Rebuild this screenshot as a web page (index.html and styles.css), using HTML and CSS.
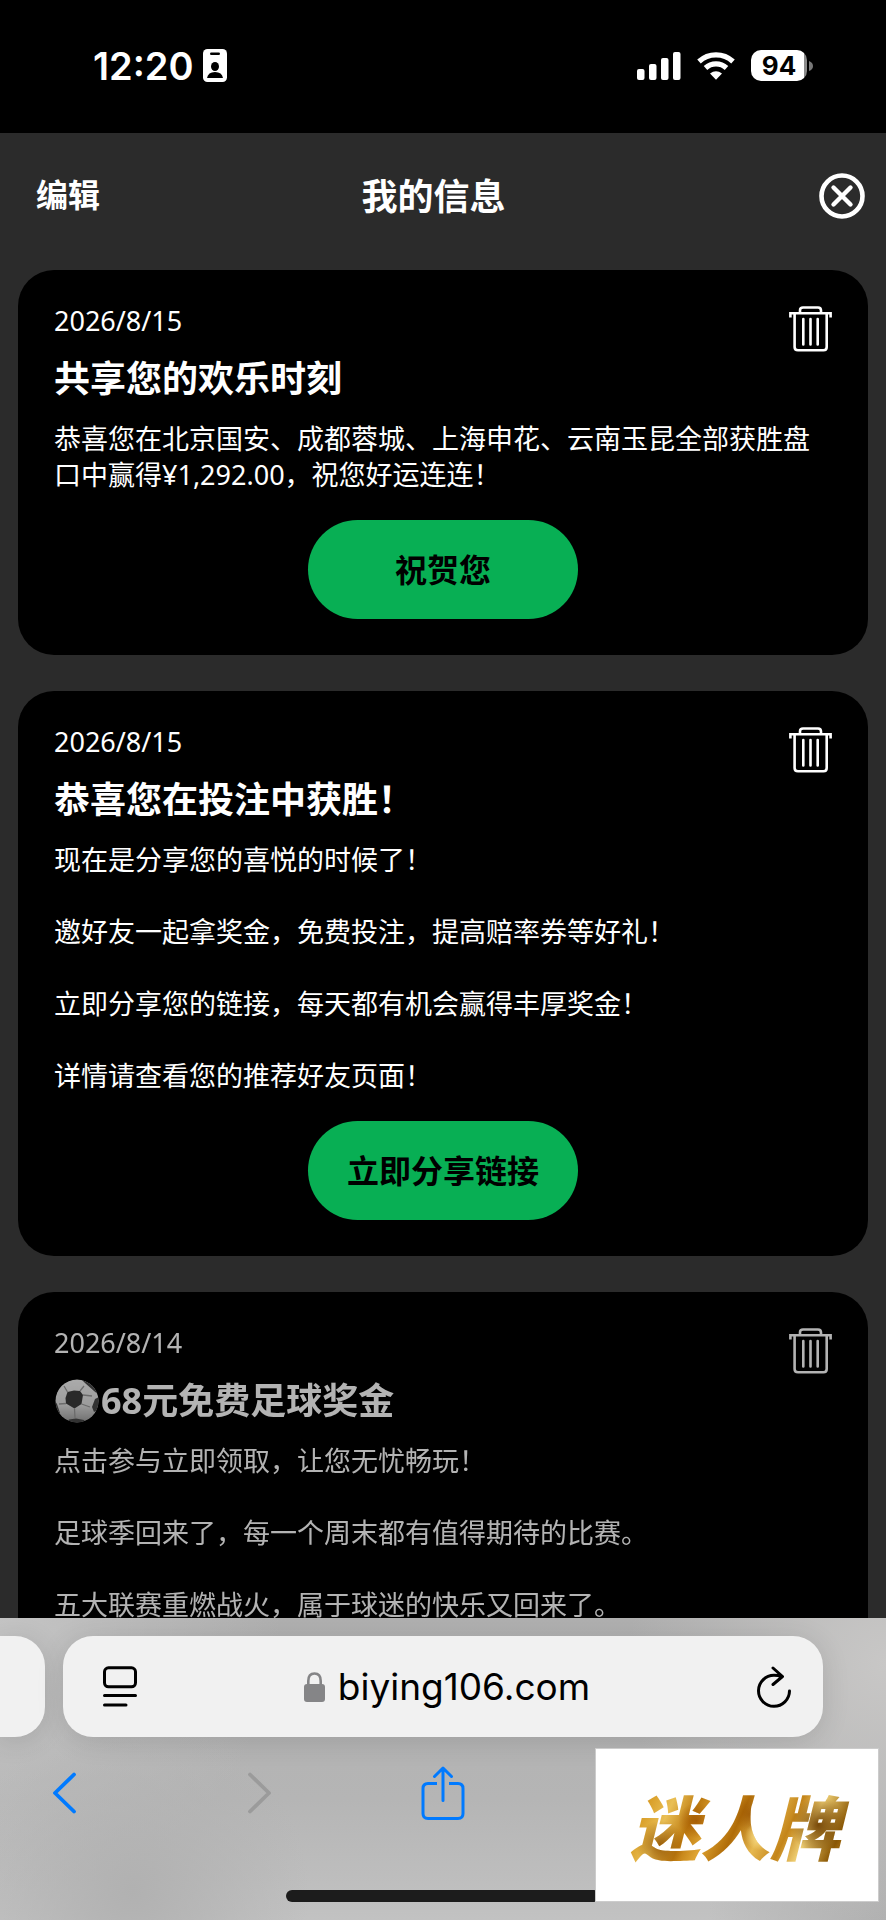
FILE: index.html
```html
<!DOCTYPE html>
<html lang="zh-CN">
<head>
<meta charset="utf-8">
<meta name="viewport" content="width=device-width, initial-scale=1">
<title>我的信息</title>
<link rel="stylesheet" href="styles.css">
</head>
<body>
<svg class="defs" aria-hidden="true">
  <symbol id="trash" viewBox="0 0 43 46">
    <g fill="none" stroke="currentColor" stroke-width="2.6">
      <path d="M1.400 11.500V7.200H41.600V11.500M11 7V4.500Q11 1.500 14 1.500H29Q32 1.500 32 4.500V7"/>
      <path d="M5.600 7.500V41Q5.600 44.300 9 44.300H34.500Q37.700 44.300 37.700 41V7.500"/>
      <path stroke-linecap="round" d="M14.300 13V38.500M21.500 13V38.500M28.700 13V38.500"/>
    </g>
  </symbol>
</svg>

<div class="status">
  <div class="status-left">
    <span class="time">12:20</span>
    <svg width="24" height="33" viewBox="0 0 24 33"><rect width="24" height="33" rx="4.500" fill="#fff"/><rect x="7" y="3.500" width="10" height="2.600" rx="1.300"/><ellipse cx="12" cy="17.500" rx="4" ry="4.500"/><path d="M4 29Q5 23 12 23T20 29Z"/></svg>
  </div>
  <div class="status-right">
    <svg width="44" height="28" viewBox="0 0 44 28" fill="#fff"><rect y="17" width="7.500" height="11" rx="2"/><rect x="12" y="12" width="7.500" height="16" rx="2"/><rect x="24" y="6" width="7.500" height="22" rx="2"/><rect x="36" width="7.500" height="28" rx="2"/></svg>
    <svg width="38" height="28" viewBox="0 0 38 28"><path d="M2 9.500A25 25 0 0 1 36 9.500M8.500 16A15.500 15.500 0 0 1 29.500 16" fill="none" stroke="#fff" stroke-width="5.200"/><path d="M13 21.500Q19 17 25 21.500L19 27.800Z" fill="#fff"/></svg>
    <span class="battery"><span class="level">94</span><svg width="4" height="10" viewBox="0 0 4 10"><path d="M0 0Q4 1.500 4 5T0 10Z" fill="#777"/></svg></span>
  </div>
</div>

<header class="header">
  <button class="edit">编辑</button>
  <h1 class="title">我的信息</h1>
  <button class="close" aria-label="关闭"><svg width="46" height="46" viewBox="0 0 46 46" fill="none" stroke="#fff"><circle cx="23" cy="23" r="20.500" stroke-width="4.600"/><path d="M14.500 14.500L31.500 31.500M31.500 14.500L14.500 31.500" stroke-width="4.400" stroke-linecap="round"/></svg></button>
</header>

<main class="list">
  <article class="card">
    <div class="card-top"><time datetime="2026-08-15">2026/8/15</time><button class="delete" aria-label="删除"><svg><use href="#trash"/></svg></button></div>
    <h2>共享您的欢乐时刻</h2>
    <div class="text"><p>恭喜您在北京国安、成都蓉城、上海申花、云南玉昆全部获胜盘口中赢得¥1,292.00，祝您好运连连！</p></div>
    <button class="action">祝贺您</button>
  </article>
  <article class="card">
    <div class="card-top"><time datetime="2026-08-15">2026/8/15</time><button class="delete" aria-label="删除"><svg><use href="#trash"/></svg></button></div>
    <h2>恭喜您在投注中获胜！</h2>
    <div class="text">
      <p>现在是分享您的喜悦的时候了！</p>
      <p>邀好友一起拿奖金，免费投注，提高赔率券等好礼！</p>
      <p>立即分享您的链接，每天都有机会赢得丰厚奖金！</p>
      <p>详情请查看您的推荐好友页面！</p>
    </div>
    <button class="action">立即分享链接</button>
  </article>
  <article class="card read">
    <div class="card-top"><time datetime="2026-08-14">2026/8/14</time><button class="delete" aria-label="删除"><svg><use href="#trash"/></svg></button></div>
    <h2><svg class="ball" viewBox="0 0 44 44" aria-hidden="true">
      <defs><clipPath id="round"><circle cx="22" cy="22" r="21.500"/></clipPath><linearGradient id="shade" x1="0" y1="0" x2="0" y2="1"><stop offset="0" stop-color="#f4f4f4"/><stop offset=".6" stop-color="#dedede"/><stop offset="1" stop-color="#9c9c9c"/></linearGradient></defs>
      <g clip-path="url(#round)"><circle cx="22" cy="22" r="22" fill="url(#shade)"/>
      <path d="M12.500 13L19 11.500L25 12L28 16L26.500 25L19.500 29.500L11 24.500L10.500 19Z" fill="#3b3b3b"/>
      <path d="M12.500 13L9 7M25 12L29 7M28 16L37 17M26.500 25L35 28M19.500 29.500L20 39M11 24.500L4 25" stroke="#999" stroke-width="1.300"/>
      <path d="M26 0L30 4L39 12L44 16V0ZM44 18L40 20L37 28L39 33L44 30ZM11 44L14 40.500L21 39.500L29 41L31 44ZM0 22L2 25L5 34L0 34Z" fill="#484848"/></g>
    </svg>68元免费足球奖金</h2>
    <div class="text">
      <p>点击参与立即领取，让您无忧畅玩！</p>
      <p>足球季回来了，每一个周末都有值得期待的比赛。</p>
      <p>五大联赛重燃战火，属于球迷的快乐又回来了。</p>
    </div>
  </article>
</main>

<footer class="browser">
  <div class="tabs">
    <div class="tab-peek"></div>
    <div class="address">
      <button aria-label="页面菜单"><svg width="34" height="42" viewBox="0 0 34 42" fill="none" stroke="#000" stroke-width="3" stroke-linecap="round"><rect x="1.500" y="1.800" width="31" height="19" rx="4"/><path d="M1.500 29.500H32.500M1.500 39H23"/></svg></button>
      <button class="url"><svg width="21" height="30" viewBox="0 0 21 30"><path d="M4.300 13V9Q4.300 1.500 10.500 1.500T16.700 9V13" fill="none" stroke="#858587" stroke-width="2.600"/><rect y="12" width="21" height="18" rx="3" fill="#858587"/></svg><span>biying106.com</span></button>
      <button aria-label="重新加载"><svg width="34" height="42" viewBox="0 0 34 42" fill="none" stroke="#000" stroke-width="3" stroke-linecap="round" stroke-linejoin="round"><path d="M32.500 25A15.500 15.500 0 1 1 17 9.300Q21 9.300 24.500 10.500M16 2L25.500 10.500L16 18.500"/></svg></button>
    </div>
  </div>
  <nav class="nav">
    <button aria-label="后退"><svg width="30" height="42" viewBox="0 0 30 42" fill="none" stroke="#007aff" stroke-width="3.800" stroke-linecap="round" stroke-linejoin="round"><path d="M21 2.500L2 21L21 39.500"/></svg></button>
    <button aria-label="前进" disabled><svg width="30" height="42" viewBox="0 0 30 42" fill="none" stroke="#9b9b9b" stroke-width="3.800" stroke-linecap="round" stroke-linejoin="round"><path d="M9 2.500L28 21L9 39.500"/></svg></button>
    <button aria-label="分享"><svg width="44" height="54" viewBox="0 0 44 54" fill="none" stroke="#007aff" stroke-width="3" stroke-linecap="round" stroke-linejoin="round"><path stroke-linecap="butt" d="M16 17.500H7Q2 17.500 2 22.500V47.500Q2 52.500 7 52.500H37Q42 52.500 42 47.500V22.500Q42 17.500 37 17.500H28"/><path d="M22 34.500V2.500M13.500 10.500L22 2L30.500 10.500"/></svg></button>
  </nav>
  <div class="home"></div>
  <div class="badge"><span>迷人牌</span></div>
</footer>
</body>
</html>
```
FILE: styles.css
```css
* { box-sizing: border-box; }
body {
  margin: 0;
  height: 100vh;
  display: flex;
  flex-direction: column;
  overflow: hidden;
  background: #2b2b2b;
  color: #fff;
  font-family: "Noto Sans", "Noto Sans CJK SC", sans-serif;
  font-size: 27px;
  line-height: 36px;
}
button {
  margin: 0;
  padding: 0;
  border: 0;
  background: none;
  color: inherit;
  font: inherit;
}
svg { display: block; flex: none; }
h1, h2, p { margin: 0; }
.defs { position: absolute; width: 0; height: 0; }

.status {
  flex: none;
  height: 133px;
  padding: 0 73px 2px 93px;
  display: flex;
  justify-content: space-between;
  align-items: center;
  background: #000;
  font-family: Inter, sans-serif;
}
.status-left, .status-right, .battery { display: flex; align-items: center; }
.status-left { gap: 9px; }
.status-right { gap: 16px; }
.time { font-size: 38px; font-weight: 600; }
.battery { gap: 2px; }
.level {
  width: 56px;
  height: 31px;
  border-radius: 10px;
  background: linear-gradient(90deg, #fff 94%, #8a8a8a 94%);
  color: #000;
  font-size: 26px;
  font-weight: 700;
  line-height: 31px;
  text-align: center;
}

.header {
  flex: none;
  height: 126px;
  padding: 0 21px 0 36px;
  display: grid;
  grid-template-columns: 1fr auto 1fr;
  align-items: center;
}
.edit { justify-self: start; padding-bottom: 2px; font-size: 32px; font-weight: 600; }
.title { padding: 2px 34px 0 0; font-size: 36px; font-weight: 600; }
.close { justify-self: end; }

.list {
  flex: 1;
  min-height: 0;
  overflow: hidden;
  padding: 11px 18px 0;
  display: flex;
  flex-direction: column;
  gap: 36px;
}
.card {
  flex: none;
  padding: 36px;
  border-radius: 36px;
  background: #000;
  display: flex;
  flex-direction: column;
}
.card-top {
  height: 31px;
  line-height: 30px;
  display: flex;
  justify-content: space-between;
  align-items: flex-start;
}
.delete svg { width: 43px; height: 46px; }
.card h2 {
  margin: 18px 0;
  font-size: 36px;
  font-weight: 700;
  line-height: 48px;
  display: flex;
  align-items: center;
}
.text { display: flex; flex-direction: column; gap: 36px; }
.action {
  align-self: center;
  width: 270px;
  height: 99px;
  margin-top: 27px;
  border-radius: 50px;
  background: #08af54;
  color: #000;
  font-size: 32px;
  font-weight: 600;
}
.read > * { opacity: .7; }
.ball { width: 44px; height: 44px; margin: 0 2px 0 1px; }

.browser {
  position: relative;
  flex: none;
  height: 302px;
  padding: 18px 0;
  display: flex;
  flex-direction: column;
  overflow: hidden;
  background:
    radial-gradient(circle at 15% 90%, #b1b1b1, transparent 22%),
    radial-gradient(circle at 0% 0%, #c4c4c4, transparent 30%),
    radial-gradient(circle at 100% 15%, #c8c7c6, transparent 28%),
    linear-gradient(90deg, transparent 80%, #b1b1b1),
    linear-gradient(#b0b0b0, #b5b5b5 60%, #c2c2c2);
}
.tabs { display: flex; gap: 18px; padding-right: 63px; }
.tab-peek, .address {
  height: 101px;
  background: #f1f1f1;
  box-shadow: 0 4px 28px rgba(0, 0, 0, .12);
}
.tab-peek { width: 45px; border-radius: 0 30px 30px 0; }
.address {
  flex: 1;
  padding: 0 32px 0 40px;
  border-radius: 30px;
  display: flex;
  align-items: center;
  justify-content: space-between;
  color: #000;
}
.url {
  display: flex;
  align-items: center;
  gap: 13px;
  font-family: Inter, sans-serif;
  font-size: 37px;
}
.nav {
  width: calc(50% + 43px);
  padding: 29px 0 0 25px;
  display: flex;
  justify-content: space-between;
  align-items: center;
}
.nav button { width: 86px; display: flex; justify-content: center; }
.home {
  width: 314px;
  height: 12px;
  margin: auto auto 0;
  border-radius: 6px;
  background: #1c1c1c;
}
.badge {
  position: absolute;
  right: 7px;
  bottom: 18px;
  width: 284px;
  height: 154px;
  border: 1px solid #ccc;
  background: #fff;
  display: flex;
  align-items: center;
  justify-content: center;
}
.badge span {
  padding: 0 10px 0 6px;
  background:
    radial-gradient(circle at 16% 72%, rgba(140, 78, 0, .8), transparent 12%),
    radial-gradient(circle at 32% 45%, rgba(160, 84, 0, .8), transparent 11%),
    radial-gradient(circle at 56% 38%, rgba(150, 80, 0, .7), transparent 12%),
    radial-gradient(circle at 86% 50%, rgba(110, 62, 0, .9), transparent 14%),
    radial-gradient(circle at 60% 62%, rgba(255, 232, 150, .9), transparent 10%),
    linear-gradient(115deg, #a86a08, #d79a22 12%, #e9bf55 22%, #bd7a10 32%, #dfa432 40%, #b06c08 50%, #e6b850 60%, #c4851a 70%, #efcf74 78%, #8d5a06 90%, #d09028);
  -webkit-background-clip: text;
  background-clip: text;
  color: transparent;
  font-family: "Noto Sans CJK SC", sans-serif;
  font-size: 70px;
  font-style: italic;
  font-weight: 900;
  line-height: 90px;
}
```
